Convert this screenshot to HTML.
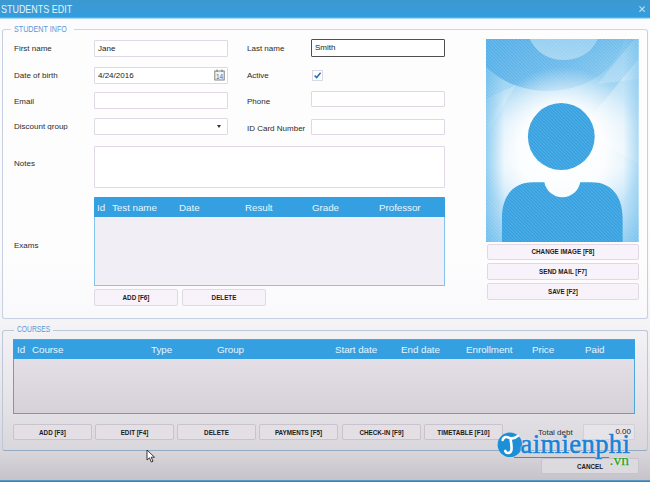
<!DOCTYPE html>
<html>
<head>
<meta charset="utf-8">
<title>Students Edit</title>
<style>
*{box-sizing:border-box;margin:0;padding:0}
html,body{width:650px;height:482px;overflow:hidden}
body{font-family:"Liberation Sans",sans-serif;position:relative;color:#222;
 background:linear-gradient(to bottom,#fcfcfe 0px,#fbfbfd 260px,#f4f3f6 322px,#eae8ed 380px,#e1dfe4 420px,#d9d7dc 450px,#c6c4ca 479.8px,#4a8fc2 480.6px,#2c7db6 482px)}
.abs{position:absolute}
.sx{display:inline-block;transform-origin:0 50%;white-space:nowrap}
#title{left:0;top:0;width:650px;height:19px;background:linear-gradient(to bottom,#3c98d0 0,#399bd6 8px,#2f9edf 17px,#7fc3ea 18.2px,#fcfcfe 19px);color:#e6f3fb;font-size:11.2px;line-height:18px;padding-left:1px}
#close{left:638.5px;top:5.5px;width:6.2px;height:6.2px}
.grp{border:1px solid #c6d0e2;border-radius:3px}
.gl{color:#5a97d4;font-size:8.8px;background:#fdfdfe;padding:0 3px;line-height:9px}
.lbl{font-size:8px;color:#2b2b2b;line-height:10px;white-space:nowrap}
.inp{border:1px solid #e0d8e4;background:#fff;font-size:8px;line-height:15px;padding-left:3px;color:#222;border-radius:1px}
.btn{border:1px solid #e1d8e5;background:#f8f3fa;font-size:6.3px;font-weight:bold;text-align:center;color:#1a1a1a;border-radius:2px;white-space:nowrap}
.btn2{border:1px solid #c8c3cc;background:#e3dfe5}
.th{color:#e8f5fd;font-size:9.8px;line-height:19px;letter-spacing:-0.04px;top:0;white-space:nowrap}
.tbl{background:#f2eef5;border:1px solid #86c3ec;border-top-color:#34a0e1}
.thead{background:#34a0e1;height:19px;left:-1px;top:0;right:-1px}
</style>
</head>
<body>
<div id="title" class="abs"><span class="sx" style="transform:scaleX(.80)">STUDENTS EDIT</span></div>
<svg id="close" class="abs" viewBox="0 0 7 7"><path d="M0.5 0.5L6.5 6.5M6.5 0.5L0.5 6.5" stroke="#b9dcf3" stroke-width="1.3" fill="none"/></svg>

<!-- STUDENT INFO group -->
<div class="abs grp" style="left:2px;top:28.5px;width:646px;height:290.5px;border-top-color:#c9d6ea;background:linear-gradient(to bottom,#fdfdfe 80%,#f9f9fb)"></div>
<div class="abs gl" style="left:10.5px;top:24.5px;width:63px;background:#fcfcfe"><span class="sx" style="transform:scaleX(.815)">STUDENT INFO</span></div>

<div class="abs lbl" style="left:14px;top:44px">First name</div>
<div class="abs inp" style="left:94px;top:39.5px;width:134px;height:17px;line-height:15.5px">Jane</div>
<div class="abs lbl" style="left:14px;top:71px">Date of birth</div>
<div class="abs inp" style="left:94px;top:67px;width:134px;height:17px">4/24/2016</div>
<svg class="abs" style="left:214px;top:69px;width:11px;height:12px" viewBox="0 0 11 12"><rect x="0.8" y="2" width="9.4" height="9" fill="#f4f4f6" stroke="#777" stroke-width="0.9"/><path d="M3 0.5v2.5M8 0.5v2.5" stroke="#777" stroke-width="1"/><text x="5.5" y="9.6" font-size="6.5" text-anchor="middle" fill="#666" font-family="Liberation Sans,sans-serif">14</text></svg>
<div class="abs lbl" style="left:14px;top:96.5px">Email</div>
<div class="abs inp" style="left:94px;top:92px;width:134px;height:17px"></div>
<div class="abs lbl" style="left:14px;top:122px;height:7.7px;overflow:hidden">Discount group</div>
<div class="abs inp" style="left:94px;top:118px;width:134px;height:17px"></div>
<div class="abs" style="left:217px;top:125px;width:0;height:0;border-left:2px solid transparent;border-right:2px solid transparent;border-top:3px solid #333"></div>

<div class="abs lbl" style="left:247px;top:44px">Last name</div>
<div class="abs inp" style="left:311px;top:39px;width:134px;height:18px;border:1.4px solid #505050;line-height:16.5px">Smith</div>
<div class="abs lbl" style="left:247px;top:71px">Active</div>
<div class="abs" style="left:312px;top:70px;width:11px;height:11px;border:1px solid #dcd8e4;background:#fff"></div>
<svg class="abs" style="left:312px;top:70px;width:11px;height:11px" viewBox="0 0 11 11"><path d="M2.6 5.4L4.6 7.6L8.6 2.8" stroke="#1b6fc4" stroke-width="1.5" fill="none"/></svg>
<div class="abs lbl" style="left:247px;top:96.5px">Phone</div>
<div class="abs inp" style="left:311px;top:91px;width:134px;height:16px"></div>
<div class="abs lbl" style="left:247px;top:124px">ID Card Number</div>
<div class="abs inp" style="left:311px;top:119px;width:134px;height:16px"></div>

<div class="abs lbl" style="left:14px;top:159px">Notes</div>
<div class="abs inp" style="left:94px;top:146px;width:351px;height:42px"></div>

<div class="abs lbl" style="left:14px;top:241px">Exams</div>
<div class="abs tbl" style="left:94px;top:196.5px;width:351px;height:89.5px">
  <div class="abs thead"></div>
  <div class="abs th" style="left:2px">Id</div>
  <div class="abs th" style="left:17px">Test name</div>
  <div class="abs th" style="left:84px">Date</div>
  <div class="abs th" style="left:150px">Result</div>
  <div class="abs th" style="left:217px">Grade</div>
  <div class="abs th" style="left:284px">Professor</div>
</div>
<div class="abs btn" style="left:94px;top:289px;width:84px;height:17px;line-height:15px">ADD [F6]</div>
<div class="abs btn" style="left:182px;top:289px;width:84px;height:17px;line-height:15px">DELETE</div>

<!-- photo -->
<svg class="abs" id="photo" style="left:486.4px;top:38.8px;width:152.6px;height:203.2px" preserveAspectRatio="none" viewBox="0 0 153 203">
 <defs>
  <linearGradient id="vg" x1="0" y1="0" x2="0" y2="1">
   <stop offset="0" stop-color="#74c0ed"/>
   <stop offset="0.22" stop-color="#9bd2f2"/>
   <stop offset="0.42" stop-color="#cde8f9"/>
   <stop offset="0.62" stop-color="#d9eefb"/>
   <stop offset="0.85" stop-color="#b5ddf6"/>
   <stop offset="1" stop-color="#8ccbf0"/>
  </linearGradient>
  <radialGradient id="rg" gradientUnits="userSpaceOnUse" cx="76" cy="112" r="80" gradientTransform="translate(76 112) scale(1 1.05) translate(-76 -112)">
   <stop offset="0" stop-color="#ffffff" stop-opacity="1"/>
   <stop offset="0.55" stop-color="#ffffff" stop-opacity="0.9"/>
   <stop offset="1" stop-color="#ffffff" stop-opacity="0"/>
  </radialGradient>
  <linearGradient id="hg" x1="0" y1="0" x2="1" y2="0">
   <stop offset="0" stop-color="#4fb0e8" stop-opacity="0.55"/>
   <stop offset="0.12" stop-color="#4fb0e8" stop-opacity="0"/>
   <stop offset="0.9" stop-color="#4fb0e8" stop-opacity="0"/>
   <stop offset="1" stop-color="#4fb0e8" stop-opacity="0.4"/>
  </linearGradient>
  <pattern id="st" width="2.4" height="2.4" patternUnits="userSpaceOnUse" patternTransform="rotate(-45)">
   <rect width="1.1" height="2.4" fill="#ffffff" opacity="0.16"/>
  </pattern>
  <linearGradient id="rgf" x1="0" y1="0" x2="1" y2="0"><stop offset="0" stop-color="#3fa3e4" stop-opacity="0.75"/><stop offset="0.6" stop-color="#3fa3e4" stop-opacity="0.45"/><stop offset="1" stop-color="#3fa3e4" stop-opacity="0.1"/></linearGradient>
  <clipPath id="pc"><rect width="153" height="203"/></clipPath>
 </defs>
 <rect width="153" height="203" fill="url(#vg)"/>
 <g clip-path="url(#pc)">
  <path d="M-16 -10 A78 62 0 0 0 140 -10 L114 -10 A36 31 0 0 1 42 -10Z" fill="url(#rgf)"/>
  <path d="M42 -10 A36 31 0 0 0 114 -10Z" fill="#ffffff" opacity="0.22"/>
  <path d="M-5 62 L30 46 L-5 105Z" fill="#ffffff" opacity="0.22"/>
  <path d="M153 20 L95 90 L153 125Z" fill="#ffffff" opacity="0.3"/>
  <path d="M153 -5 L112 45 L153 40Z" fill="#ffffff" opacity="0.2"/>
 </g>
 <rect width="153" height="203" fill="url(#rg)"/>
 <rect width="153" height="203" fill="url(#hg)"/>
 <circle cx="75.5" cy="97.5" r="33.5" fill="#329fe0"/>
 <path d="M16 203 V179 C16 156 28 143 47 143 H58.5 A18.3 18.3 0 0 0 94.500 143 H106 C125 143 137 156 137 179 V203 Z" fill="#329fe0"/>
 <rect width="153" height="203" fill="url(#st)"/>
</svg>
<div class="abs btn" style="left:487px;top:243.7px;width:152px;height:16.6px;line-height:14.6px">CHANGE IMAGE [F8]</div>
<div class="abs btn" style="left:487px;top:263.3px;width:152px;height:16.6px;line-height:15px">SEND MAIL [F7]</div>
<div class="abs btn" style="left:487px;top:283px;width:152px;height:16.6px;line-height:15px">SAVE [F2]</div>

<!-- COURSES group -->
<div class="abs grp" style="left:2px;top:330px;width:646px;height:121px;border-color:#bcc7d8;border-bottom:1.6px solid #93abc3"></div>
<div class="abs gl" style="left:14px;top:324.5px;width:39px;background:#f3f2f5"><span class="sx" style="transform:scaleX(.765)">COURSES</span></div>
<div class="abs tbl" style="left:13px;top:339.2px;width:622px;height:75px;background:linear-gradient(to bottom,#e4dfe7 20px,#d5d1d8);border-color:#4fa6de">
  <div class="abs thead"></div>
  <div class="abs th" style="left:3px">Id</div>
  <div class="abs th" style="left:18px">Course</div>
  <div class="abs th" style="left:137px">Type</div>
  <div class="abs th" style="left:203px">Group</div>
  <div class="abs th" style="left:321px">Start date</div>
  <div class="abs th" style="left:387px">End date</div>
  <div class="abs th" style="left:452px">Enrollment</div>
  <div class="abs th" style="left:518px">Price</div>
  <div class="abs th" style="left:571px">Paid</div>
</div>
<div class="abs btn btn2" style="left:13px;top:424px;width:79px;height:16px;line-height:15px">ADD [F3]</div>
<div class="abs btn btn2" style="left:95px;top:424px;width:79px;height:16px;line-height:15px">EDIT [F4]</div>
<div class="abs btn btn2" style="left:177px;top:424px;width:79px;height:16px;line-height:15px">DELETE</div>
<div class="abs btn btn2" style="left:259px;top:424px;width:79px;height:16px;line-height:15px">PAYMENTS [F5]</div>
<div class="abs btn btn2" style="left:342px;top:424px;width:79px;height:16px;line-height:15px">CHECK-IN [F9]</div>
<div class="abs btn btn2" style="left:424px;top:424px;width:79px;height:16px;line-height:15px">TIMETABLE [F10]</div>
<div class="abs lbl" style="left:538px;top:428px">Total debt</div>
<div class="abs inp" style="left:583px;top:424px;width:52px;height:16px;text-align:right;padding-right:3px;background:#e6e3e9;border-color:#d3cfd7;line-height:14px">0.00</div>

<div class="abs btn btn2" style="left:541px;top:458px;width:98px;height:16px;line-height:15px;background:#dddadf;border-color:#c6c3ca">CANCEL</div>

<!-- cursor -->
<svg class="abs" style="left:146px;top:449px;width:10px;height:14px" viewBox="0 0 10 14"><path d="M1 1V11L3.5 8.8L5.3 13L7 12.2L5.2 8.2H8.5Z" fill="#fff" stroke="#222" stroke-width="0.9"/></svg>

<!-- watermark logo -->
<div class="abs" style="left:514px;top:456.5px;width:95px;height:1px;background:#3a8fd0"></div>
<svg class="abs" style="left:497px;top:432px;width:26px;height:26px" viewBox="0 0 26 26"><circle cx="12.9" cy="12.8" r="12.3" fill="#1c8fd6"/><path d="M5.7 8C6.3 5.2 9 4.4 11.6 5.6C14.5 6.9 17.8 6.8 20.8 3.9M13.4 6.6C14.2 11 15.2 15 14.3 18.4C13.4 21.6 9.3 22 8.2 18.9" stroke="#fff" stroke-width="2.6" fill="none" stroke-linecap="round"/></svg>
<div class="abs" style="left:520.5px;top:428px;font-family:'Liberation Serif',serif;font-size:26.5px;line-height:32px;color:#1a82d6;letter-spacing:0.42px;-webkit-text-stroke:0.6px #1a82d6;text-shadow:0 0 1.5px #fff,0 0 2px #fff">aimienphi</div>
<div class="abs" style="left:609.5px;top:450.5px;font-family:'Liberation Serif',serif;font-size:15.5px;line-height:18px;color:#22a322;-webkit-text-stroke:0.25px #22a322;text-shadow:0 0 1.5px #fff,0 0 1.5px #fff">.vn</div>
</body>
</html>
